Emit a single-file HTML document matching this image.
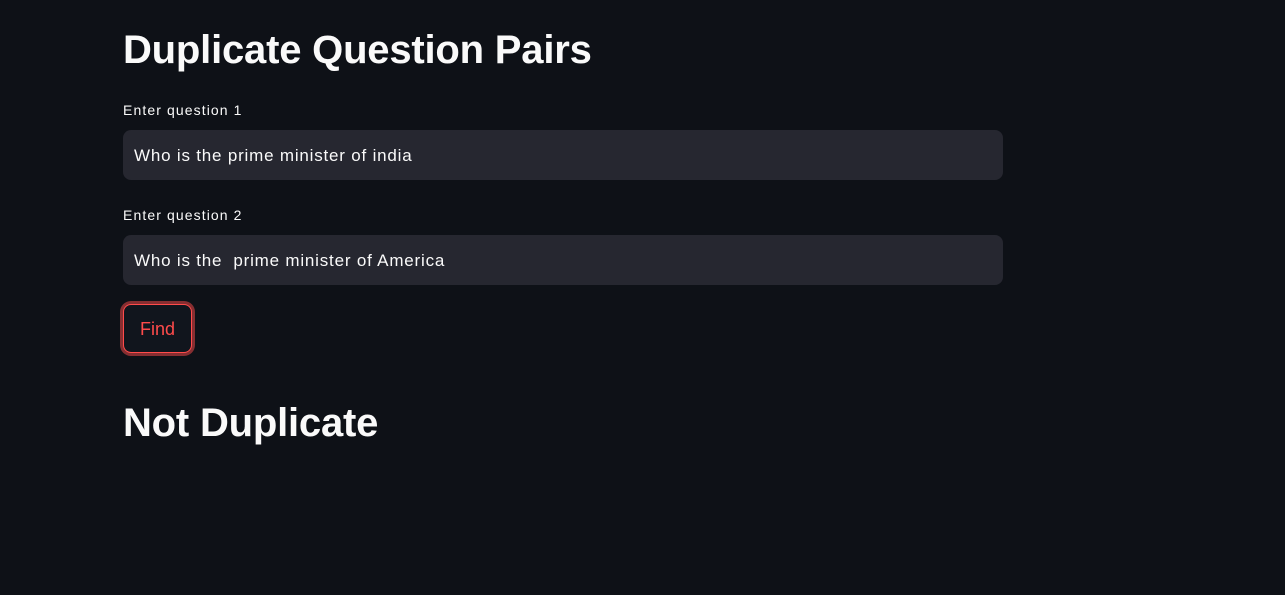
<!DOCTYPE html>
<html><head><style>
body{margin:0;background:#0e1117;width:1285px;height:595px;overflow:hidden;font-family:"Liberation Sans",sans-serif;color:#fafafa}
h1{position:absolute;left:123px;margin:0;font-weight:bold;letter-spacing:-0.2px;line-height:1}
.lbl{position:absolute;left:123px;font-size:14px;letter-spacing:1.1px}
.inp{position:absolute;left:123px;width:880px;height:50px;background:#262730;border-radius:8px;box-sizing:border-box;padding-left:11px;line-height:52px;font-size:17px;letter-spacing:0.8px;white-space:pre}
.btn{position:absolute;left:123px;top:304px;width:69px;height:49px;box-sizing:border-box;border:1px solid #ff4b4b;border-radius:8px;box-shadow:0 0 0 3px rgba(255,75,75,0.5);color:#ff4b4b;font-size:18px;text-align:center;line-height:49px;background:#11151d}
</style></head><body>
<h1 style="top:30px;font-size:40px">Duplicate Question Pairs</h1>
<div class="lbl" style="top:102px">Enter question 1</div>
<div class="inp" style="top:130px">Who is the prime minister of india</div>
<div class="lbl" style="top:207px">Enter question 2</div>
<div class="inp" style="top:235px">Who is the  prime minister of America</div>
<div class="btn">Find</div>
<h1 style="top:403px;font-size:40px">Not Duplicate</h1>
</body></html>
